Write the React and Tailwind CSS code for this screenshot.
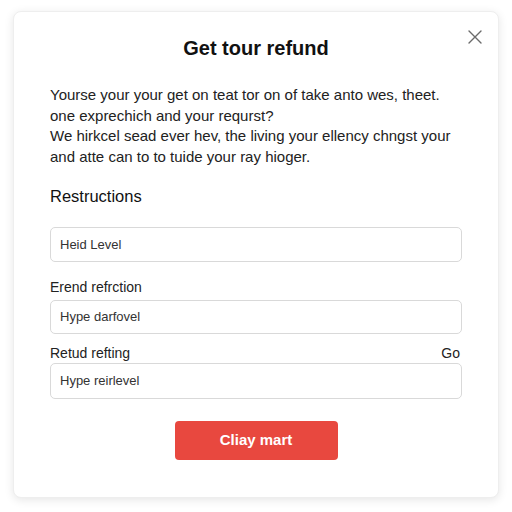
import React from "react";

const Field = ({ value, h }) => (
  <div
    className={`${h} w-full rounded-[5px] border border-[#d9d9d9] bg-white pl-[9px] flex items-center text-[13px] text-[#333]`}
  >
    {value}
  </div>
);

export default function App() {
  return (
    <div
      className="w-[512px] h-[512px] bg-white pt-[11px] pl-[13px]"
      style={{ fontFamily: '"Liberation Sans", Arial, sans-serif' }}
    >
      <div className="relative w-[486px] h-[487px] rounded-[8px] bg-white border border-[#eeeeee] shadow-[0_2px_10px_rgba(0,0,0,0.10)] pt-[24px] px-[36px]">
        {/* Close */}
        <button className="absolute top-[17px] right-[15px] text-[#6b6b6b]">
          <svg width="16" height="16" viewBox="0 0 16 16" fill="none" stroke="currentColor" strokeWidth="1.4" strokeLinecap="round">
            <path d="M2 2L14 14M14 2L2 14" />
          </svg>
        </button>

        {/* Header */}
        <h1 className="text-center text-[20px] leading-[24px] font-bold text-[#111]">
          Get tour refund
        </h1>

        <p className="mt-[25px] text-[15px] leading-[20.7px] text-[#222]">
          Yourse your your get on teat tor on of take anto wes, theet.
          <br />
          one exprechich and your requrst?
          <br />
          We hirkcel sead ever hev, the living your ellency chngst your
          <br />
          and atte can to to tuide your ray hioger.
        </p>

        <h2 className="mt-[17px] text-[16.5px] leading-[22px] text-[#111]">Restructions</h2>

        <div className="mt-[20px]">
          <Field value="Heid Level" h="h-[35px]" />
        </div>

        <label className="block mt-[16px] text-[14px] leading-[18px] text-[#222]">Erend refrction</label>
        <div className="mt-[4px]">
          <Field value="Hype darfovel" h="h-[34px]" />
        </div>

        <div className="mt-[10px] flex justify-between items-center text-[14px] leading-[18px] text-[#222] pr-[2px]">
          <span>Retud refting</span>
          <span>Go</span>
        </div>
        <div className="mt-[1px]">
          <Field value="Hype reirlevel" h="h-[36px]" />
        </div>

        <div className="mt-[22px] flex justify-center">
          <button className="w-[163px] h-[39px] rounded-[4px] bg-[#e8483f] text-white text-[15px] font-bold">
            Cliay mart
          </button>
        </div>
      </div>
    </div>
  );
}
